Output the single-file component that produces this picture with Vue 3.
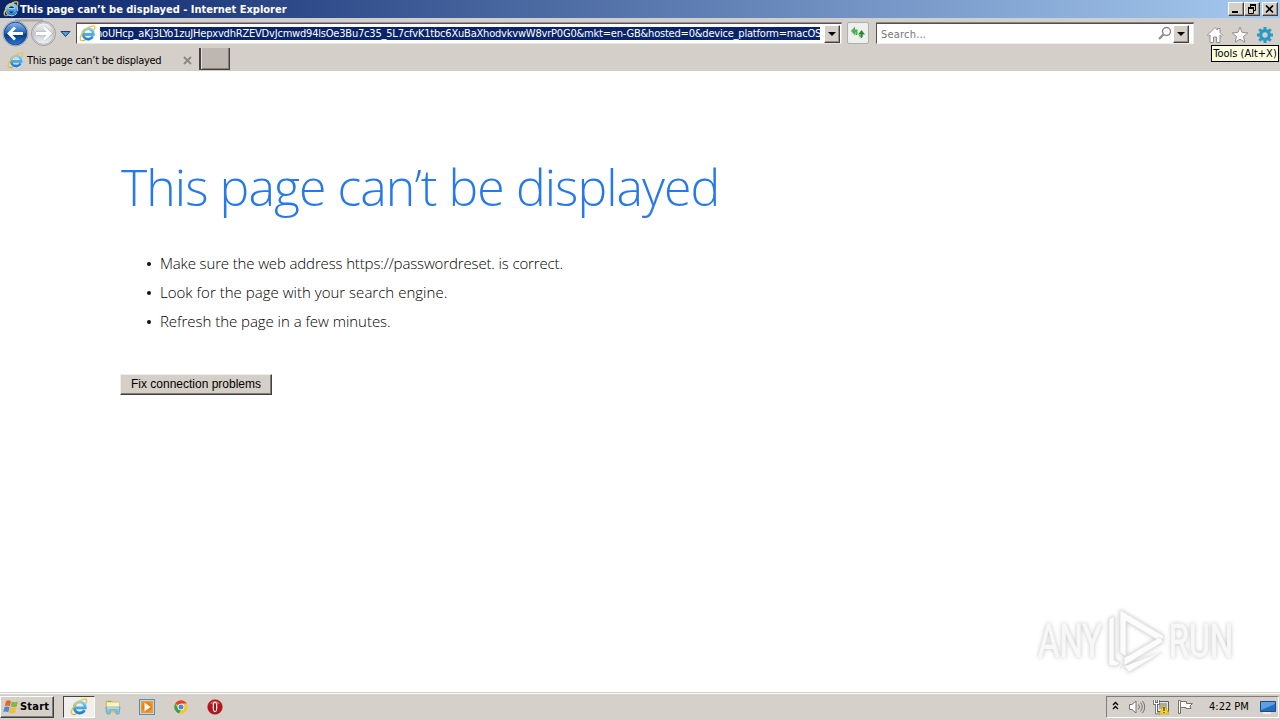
<script setup>
import { ref } from 'vue'

const title = 'This page can’t be displayed'
const address = 'noUHcp_aKj3LYo1zuJHepxvdhRZEVDvJcmwd94lsOe3Bu7c35_5L7cfvK1tbc6XuBaXhodvkvwW8vrP0G0&mkt=en-GB&hosted=0&device_platform=macOS'
const search = ref('')

const tips = [
  'Make sure the web address https://passwordreset. is correct.',
  'Look for the page with your search engine.',
  'Refresh the page in a few minutes.'
]
</script>

<template>
  <div class="desktop">
    <!-- shared shapes -->
    <svg class="defs" width="0" height="0">
      <defs>
        <linearGradient id="ie-blue" x1="0" y1="0" x2="0" y2="1">
          <stop offset="0" stop-color="#7fd0f7" />
          <stop offset="1" stop-color="#1b82d2" />
        </linearGradient>
        <symbol id="ie" viewBox="0 0 16 16">
          <path d="M13 11.1A5 5 0 1 1 13.6 8.7H4.4" fill="none" stroke="#d5edfa" stroke-width="3.2" />
          <path d="M12.9 10.8A4.9 4.9 0 1 1 13.5 8.8H4.8" fill="none" stroke="url(#ie-blue)" stroke-width="2.5" />
          <path d="M2.5 14.7C-.6 13.5 2.1 7.6 7 3.7C10.4 1 14.3-.2 14.8 1.8C15 2.7 14.6 4 13.8 5.1" fill="none" stroke="#efc33d" stroke-width="1.3" />
          <path d="M2.5 14.7c1 .3 2.2-.2 3.3-.9" fill="none" stroke="#e1a51c" stroke-width="1.1" />
        </symbol>
      </defs>
    </svg>

    <header class="titlebar">
      <svg class="ie-title"><use href="#ie" /></svg>
      <span class="title-text">{{ title }} - Internet Explorer</span>
      <div class="window-buttons">
        <button class="win-btn">
          <svg width="12" height="10"><path d="M2 8h6" stroke="#000" stroke-width="2" /></svg>
        </button>
        <button class="win-btn">
          <svg width="12" height="10" fill="none" stroke="#000"><path d="M4 1h6M4.500 1v2M9.500 1v5.500H8M2 4h6M2.500 4v5.500h5V4" /><path d="M4 1h6M2 4h6" stroke-width="2" /></svg>
        </button>
        <button class="win-btn close">
          <svg width="12" height="10"><path d="M2 1.500l7 7M9 1.500l-7 7" stroke="#000" stroke-width="1.700" /></svg>
        </button>
      </div>
    </header>

    <div class="toolbar">
      <svg class="nav" width="76" height="30" viewBox="0 0 76 30">
        <defs>
          <linearGradient id="back" x1="0" y1="0" x2="0" y2="1">
            <stop offset="0" stop-color="#8db7ed" />
            <stop offset=".45" stop-color="#2867bd" />
            <stop offset=".55" stop-color="#093886" />
            <stop offset="1" stop-color="#267ad5" />
          </linearGradient>
          <linearGradient id="forward" x1="0" y1="0" x2="0" y2="1">
            <stop offset="0" stop-color="#f5f5f5" />
            <stop offset=".5" stop-color="#c5c9cf" />
            <stop offset="1" stop-color="#f2f4f6" />
          </linearGradient>
        </defs>
        <path d="M15 2.500h28" stroke="#aaa6a4" stroke-width="2" />
        <circle cx="15.500" cy="15.500" r="12.500" fill="#d9e2ec" stroke="#77869b" stroke-width=".7" />
        <circle cx="15.500" cy="15.500" r="11.300" fill="url(#back)" stroke="#194a91" />
        <path d="M23 15.500H9M15 9.500l-6 6 6 6" fill="none" stroke="#fff" stroke-width="2.800" />
        <circle cx="43.500" cy="15.500" r="12" fill="#e8e9ea" stroke="#85888d" stroke-width=".8" />
        <circle cx="43.500" cy="15.500" r="10.700" fill="url(#forward)" stroke="#b7babf" />
        <path d="M36 15.500h14M44 9.500l6 6-6 6" fill="none" stroke="#b5b8bd" stroke-width="3.800" />
        <path d="M36 15.500h14M44 9.500l6 6-6 6" fill="none" stroke="#fff" stroke-width="2.800" />
        <path d="M61 13.500h9l-4.500 5z" fill="#4ca1d9" stroke="#173f75" />
      </svg>

      <div class="address">
        <svg class="ie-address"><use href="#ie" /></svg>
        <div class="selection"><span>{{ address }}</span></div>
        <button class="drop"><i></i></button>
      </div>

      <button class="refresh">
        <svg width="16" height="16">
          <path d="M1 6l4-4.500v3h2.500V10h-2V7.500H5v3z" fill="#4db04b" />
          <path d="M11.500 5l3.500 4.500h-2.300V12l-2 1.500v-4H8z" fill="#2b8a31" />
          <path d="M8.500 11l2-1.500V12z" fill="#2b8a31" />
        </svg>
      </button>

      <div class="search">
        <input v-model="search" placeholder="Search...">
        <svg width="14" height="15" fill="none" stroke="#8b8887">
          <circle cx="8.500" cy="5.500" r="4" stroke-width="1.500" /><path d="M5.500 8.500L1 13" stroke-width="2.200" />
        </svg>
        <button class="drop"><i></i></button>
      </div>

      <div class="commands">
        <svg width="18" height="18" viewBox="0 0 18 18">
          <path d="M1.500 9L9 1.500l2.500 2.500V2.500h2.500V6.500L16.500 9l-1.200 1.200-1.300-1.200v7.500h-3.500V11h-3v5.500H4V9l-1.300 1.200z" fill="#fff" stroke="#918d8b" />
        </svg>
        <svg width="18" height="18" viewBox="0 0 18 18">
          <path d="M9 1.300l2.200 5.200 5.600.4-4.300 3.600 1.400 5.700L9 13.200l-4.900 3 1.400-5.700L1.200 6.900l5.600-.4z" fill="#fff" stroke="#918d8b" />
        </svg>
        <svg width="18" height="18" viewBox="0 0 18 18">
          <g fill="none" stroke="#279bc5">
            <circle cx="9" cy="9" r="4.300" stroke-width="3.300" />
            <path d="M9 1v3M9 14v3M1 9h3M14 9h3M3.300 3.300l2.200 2.200M12.500 12.500l2.200 2.200M3.300 14.700l2.200-2.200M12.500 5.500l2.200-2.200" stroke-width="3" />
          </g>
        </svg>
        <div class="tooltip">Tools (Alt+X)</div>
      </div>
    </div>

    <nav class="tabs">
      <div class="tab">
        <svg class="ie-tab"><use href="#ie" /></svg>
        <span class="tab-title">{{ title }}</span>
        <svg class="tab-close" width="9" height="9"><path d="M1 1l7 7M8 1L1 8" stroke="#8b8784" stroke-width="1.800" /></svg>
      </div>
      <button class="new-tab"></button>
    </nav>

    <main class="page">
      <h1>{{ title }}</h1>
      <ul>
        <li v-for="(tip, i) in tips" :key="tip" :class="'tip-' + i"><span>{{ tip }}</span></li>
      </ul>
      <button class="fix">Fix connection problems</button>

      <svg class="watermark" width="220" height="80" viewBox="0 0 220 80">
        <g class="mark-text">
          <text x="13" y="57" textLength="64" lengthAdjust="spacingAndGlyphs">ANY</text>
          <text x="144" y="57" textLength="64" lengthAdjust="spacingAndGlyphs">RUN</text>
        </g>
        <g class="mark-logo">
          <path d="M84 65V19l5-3v44l6 3-4 3z" />
          <path d="M95 53V10l44 26-3 6-35-21v35z" />
          <path d="M95 68l43-26-3-5-36 21v8l5 6 33-20" />
        </g>
      </svg>
    </main>

    <footer class="taskbar">
      <button class="start">
        <svg width="16" height="16" viewBox="0 0 16 16">
          <path d="M3 2Q6 .5 8 2.200L6.800 7.300Q4.500 5.900 1.800 7.100z" fill="#e96331" />
          <path d="M8.800 2.500Q11.500 4 15 2.400L13.700 7.500Q10.500 9 7.600 7.500z" fill="#80b93d" />
          <path d="M1.600 8Q4.400 6.900 6.600 8.200L5.300 13.300Q3 11.800.3 13z" fill="#478bd2" />
          <path d="M7.400 8.500Q10.300 10 13.500 8.500L12.100 13.500Q9 15 6.100 13.600z" fill="#f3bd34" />
        </svg>
        <span>Start</span>
      </button>
      <div class="quick">
        <div class="task active"><svg class="ie-task"><use href="#ie" /></svg></div>
        <div class="task">
          <svg width="18" height="18" viewBox="0 0 18 18">
            <path d="M2 3h5l1 1h7v10H2z" fill="#e8c866" stroke="#c5a65a" stroke-width=".6" />
            <path d="M3 4.500h12V9H3z" fill="#fff3b9" /><path d="M4 3h3v1H4z" fill="#62b86d" />
            <path d="M2 9h14l-1 7h-3v-4H6v4H3z" fill="#85c6e5" stroke="#4f99bd" stroke-width=".6" />
            <path d="M3 10h12" stroke="#d0edf8" />
          </svg>
        </div>
        <div class="task">
          <svg width="18" height="18" viewBox="0 0 18 18">
            <rect x="1.500" y="1.500" width="15" height="15" fill="#b9d9f0" stroke="#538ebd" />
            <rect x="3" y="3" width="12" height="12" fill="#f59b22" />
            <circle cx="9" cy="9" r="5" fill="#ee7d12" /><path d="M6.500 4.500l6 4.500-6 4.500z" fill="#fff" />
          </svg>
        </div>
        <div class="task">
          <svg width="16" height="16" viewBox="0 0 16 16">
            <circle cx="8" cy="8" r="6.700" fill="#f6c72e" />
            <path d="M8 8L2.200 4.600A6.700 6.700 0 0 1 13.800 4.600H8z" fill="#e14135" />
            <path d="M2.200 4.600L5.500 10l2.500 1-2 3.400A6.700 6.700 0 0 1 2.200 4.600z" fill="#35a457" />
            <circle cx="8" cy="8" r="3.300" fill="#fff" /><circle cx="8" cy="8" r="2.500" fill="#4c86dc" />
          </svg>
        </div>
        <div class="task">
          <svg width="16" height="16" viewBox="0 0 16 16">
            <circle cx="8" cy="8" r="7.300" fill="#b81319" stroke="#8f1515" stroke-width=".5" />
            <path d="M3 4.500Q8-1 13 4.500Q8 7 3 4.500" fill="#e15d59" />
            <ellipse cx="8" cy="8" rx="2.300" ry="5.200" fill="#fff" /><ellipse cx="8" cy="8" rx="1.100" ry="4.300" fill="#92161b" />
          </svg>
        </div>
      </div>
      <div class="tray">
        <svg class="chevron" width="7" height="9" fill="none" stroke="#000" stroke-width="1.400"><path d="M1 4l2.500-2.500L6 4M1 8l2.500-2.500L6 8" /></svg>
        <svg class="volume" width="18" height="16" fill="none" stroke="#77736f">
          <path d="M1.500 5.500H4L8 2v12l-4-3.500H1.500z" fill="#fff" /><path d="M10.500 5.500q2 2.500 0 5M12.500 3.500q3.500 4.500 0 9M14.500 2q4.500 6 0 12" />
        </svg>
        <svg class="network" width="17" height="16" viewBox="0 0 17 16">
          <path d="M4.500 2.500h11v10h-11z" fill="#e7e6e3" stroke="#5e5c5b" /><path d="M6 4h8v6H6z" fill="#aaa" />
          <path d="M1.500 1v3.500h4V1M3.500 4.500V14h4" fill="none" stroke="#555" stroke-width="2.600" />
          <path d="M1.500 1v3.500h4V1M3.500 4.500V14h4" fill="none" stroke="#fff" stroke-width="1.200" />
          <path d="M11 5.500l5 9.500H6z" fill="#fad31b" stroke="#cba51a" stroke-width=".7" /><path d="M11 8v4M11 13v1" stroke="#333" stroke-width="1.200" />
        </svg>
        <svg class="flag" width="17" height="16" viewBox="0 0 17 16" fill="#fff" stroke="#77736f">
          <path d="M1.500 1.500h2v13h-2z" /><path d="M3.500 2.500h6v2h6l-2.500 2.500 1 2.500h-5v-1h-5.500z" />
        </svg>
        <span class="clock">4:22 PM</span>
        <svg class="show-desktop" width="16" height="16" viewBox="0 0 16 16">
          <path d="M.5 2.500h15v10H.5z" fill="#226ec3" stroke="#204980" /><path d="M1 3h14v2L1 11z" fill="#5ca1e3" /><path d="M3 14h8" stroke="#eee" stroke-width="2" />
        </svg>
      </div>
    </footer>
  </div>
</template>

<style>
body {
  margin: 0;
  overflow: hidden;
}
</style>

<style scoped>
* {
  box-sizing: border-box;
}

.desktop {
  width: 1280px;
  height: 720px;
  display: flex;
  flex-direction: column;
  background: #fff;
  font-family: "DejaVu Sans Condensed", "DejaVu Sans", sans-serif;
  font-stretch: condensed;
  font-size: 11px;
  color: #000;
}

.defs {
  position: absolute;
}

svg {
  display: block;
  flex-shrink: 0;
}

button {
  padding: 0;
  font: inherit;
  color: inherit;
}

.titlebar {
  height: 18px;
  display: flex;
  align-items: center;
  padding: 0 2px 0 3px;
  background: linear-gradient(to right, #0a246a, #a6caf0);
}

.ie-title {
  width: 16px;
  height: 16px;
}

.title-text {
  margin-left: 1px;
  color: #fff;
  font-weight: bold;
  white-space: nowrap;
}

.window-buttons {
  display: flex;
  margin-left: auto;
}

.win-btn,
.drop {
  display: flex;
  align-items: center;
  justify-content: center;
  background: #d4d0c8;
  border: 1px solid;
  border-color: #fff #404040 #404040 #fff;
  box-shadow: inset -1px -1px #96918b;
}

.win-btn {
  width: 16px;
  height: 14px;
}

.win-btn.close {
  margin-left: 2px;
}

.toolbar {
  height: 30px;
  display: flex;
  align-items: flex-start;
  background: linear-gradient(#cdd0d0, #d5cfca 6px);
}

.address {
  width: 766px;
  height: 21px;
  margin-top: 5px;
  display: flex;
  align-items: center;
  background: #fff;
  border: 1px solid;
  border-color: #5d4e54 #e8e5e2 #e8e5e2 #554a51;
  box-shadow: 0 -1px #9b8b92;
}

.ie-address {
  width: 17px;
  height: 17px;
  margin-left: 2px;
}

.selection {
  width: 720px;
  height: 13px;
  margin-left: 4px;
  overflow: hidden;
  background: #0a246a;
  color: #fff;
  line-height: 14px;
  white-space: nowrap;
}

.selection span {
  margin-left: -4px;
  letter-spacing: -0.2px;
}

.drop {
  width: 16px;
  height: 18px;
}

.drop i {
  border: 4px solid transparent;
  border-top-color: #000;
  border-bottom: 0;
}

.address .drop {
  margin-left: 4px;
}

.refresh {
  width: 22px;
  height: 22px;
  margin: 4px 0 0 5px;
  display: flex;
  align-items: center;
  justify-content: center;
  background: #edf0ec;
  border: 1px solid #aeb0ad;
  border-radius: 2px;
}

.search {
  width: 318px;
  height: 21px;
  margin: 5px 0 0 7px;
  padding-right: 4px;
  display: flex;
  align-items: center;
  background: #fff;
  border: 1px solid;
  border-color: #55504c #f1efed #f1efed #55504c;
  box-shadow: 0 -1px #89827e;
}

.search input {
  flex: 1;
  min-width: 0;
  padding: 2px 0 0 4px;
  border: 0;
  outline: 0;
  background: transparent;
  font: inherit;
  letter-spacing: 0.2px;
}

.search input::placeholder {
  color: #777;
}

.search .drop {
  margin-left: 1px;
}

.commands {
  position: relative;
  display: flex;
  gap: 7px;
  margin: 8px 0 0 12px;
}

.tooltip {
  position: absolute;
  top: 19px;
  right: -5px;
  width: 68px;
  height: 17px;
  border: 1px solid #000;
  background: #ffffe1;
  line-height: 16px;
  text-align: center;
  white-space: nowrap;
  z-index: 1;
}

.tabs {
  height: 23px;
  display: flex;
  background: #d5cfca;
  border-bottom: 1px solid #d0cac5;
}

.tab {
  width: 199px;
  display: flex;
  align-items: center;
  padding-left: 7px;
}

.ie-tab {
  width: 17px;
  height: 17px;
  margin-top: 2px;
}

.tab-title {
  margin: 2px 0 0 3px;
  white-space: nowrap;
  letter-spacing: -0.28px;
}

.tab-close {
  margin: 2px 7px 0 auto;
}

.new-tab {
  width: 31px;
  height: 22px;
  background: #beb6b0;
  border: 1px solid #45403e;
  border-width: 0 1px 1px 2px;
  box-shadow: inset 1px 0 #e3dfdc, inset -1px -1px #847d79;
}

.page {
  height: 621px;
  position: relative;
  padding: 87px 0 0 120px;
}

.page h1 {
  margin: 0;
  height: 60px;
  padding-left: 1px;
  color: #2778ec;
  font: 300 50px/58px "Open Sans", sans-serif;
  letter-spacing: -0.95px;
  white-space: nowrap;
}

.page ul {
  margin: 31px 0 0;
  padding: 0 0 0 27px;
  list-style: none;
  font: 300 15px/29px "Open Sans", sans-serif;
}

.page li {
  height: 29px;
  display: flex;
  align-items: center;
  white-space: nowrap;
}

.page li::before {
  content: "";
  width: 4px;
  height: 4px;
  margin-right: 9px;
  border-radius: 50%;
  background: #111;
}

.tip-0 {
  letter-spacing: -0.14px;
}

.tip-1 {
  letter-spacing: 0.02px;
}

.tip-2 {
  letter-spacing: -0.04px;
}

.fix {
  display: block;
  width: 152px;
  height: 21px;
  margin-top: 38px;
  padding-bottom: 2px;
  background: #d4d0c8;
  border: 1px solid;
  border-color: #f0eeeb #404040 #404040 #f0eeeb;
  box-shadow: inset -1px -1px #807c77;
  font: 12px "Liberation Sans", sans-serif;
}

.watermark {
  position: absolute;
  left: 1025px;
  top: 529px;
  overflow: visible;
  filter: drop-shadow(0 0 2px #c4c4c4);
}

.mark-text {
  fill: #f8f8f8;
  stroke: #f8f8f8;
  stroke-width: 1px;
  font: 47px Roboto, sans-serif;
}

.mark-logo {
  fill: #fcfcfc;
  stroke: #e2e2e2;
  stroke-width: 0.8px;
}

.taskbar {
  height: 28px;
  display: flex;
  align-items: center;
  background: #d5d0ca;
  border-top: 1px solid #d5d0ca;
  box-shadow: inset 0 1px #fff;
}

.start {
  width: 54px;
  height: 22px;
  display: flex;
  align-items: center;
  padding-left: 2px;
  background: #d4d0c8;
  border: 1px solid;
  border-color: #fff #404040 #404040 #fff;
  box-shadow: inset -1px -1px #807c77;
  font-weight: bold;
}

.start span {
  margin-left: 1px;
  letter-spacing: 0.2px;
}

.quick {
  display: flex;
  margin-left: 9px;
}

.task {
  width: 34px;
  height: 22px;
  display: flex;
  align-items: center;
  justify-content: center;
}

.task.active {
  width: 32px;
  margin-right: 1px;
  background: #f1efed;
  border: 1px solid;
  border-color: #48443f #fff #fff #48443f;
}

.ie-task {
  width: 18px;
  height: 18px;
}

.tray {
  width: 173px;
  height: 22px;
  margin-left: auto;
  margin-right: 1px;
  display: flex;
  align-items: center;
  border: 1px solid;
  border-color: #817c77 #fff #fff #817c77;
}

.chevron {
  margin: 0 0 2px 5px;
}

.volume {
  margin-left: 9px;
}

.network {
  margin-left: 7px;
}

.flag {
  margin-left: 7px;
}

.clock {
  margin-left: 15px;
  white-space: nowrap;
}

.show-desktop {
  margin-left: auto;
  margin-right: 2px;
}
</style>
